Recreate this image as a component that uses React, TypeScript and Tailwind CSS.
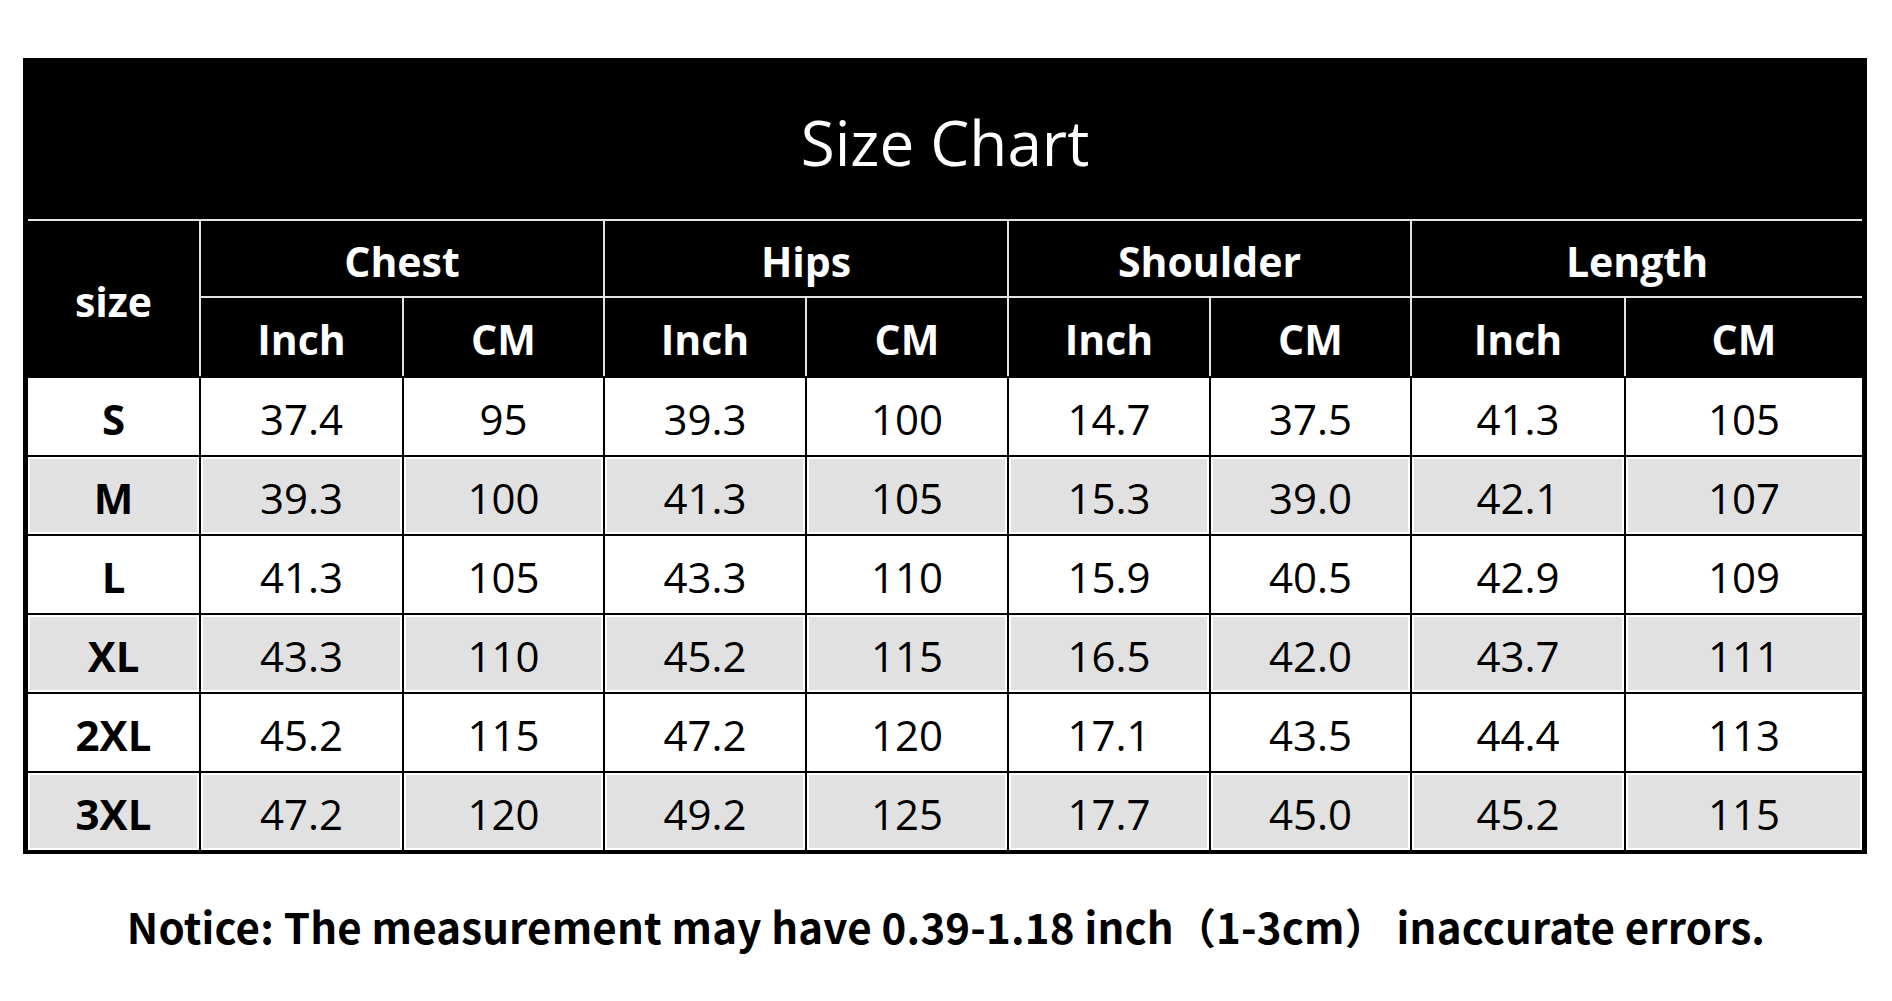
import React from "react";

const groups = ["Chest", "Hips", "Shoulder", "Length"];

const rows: { size: string; vals: string[] }[] = [
  { size: "S", vals: ["37.4", "95", "39.3", "100", "14.7", "37.5", "41.3", "105"] },
  { size: "M", vals: ["39.3", "100", "41.3", "105", "15.3", "39.0", "42.1", "107"] },
  { size: "L", vals: ["41.3", "105", "43.3", "110", "15.9", "40.5", "42.9", "109"] },
  { size: "XL", vals: ["43.3", "110", "45.2", "115", "16.5", "42.0", "43.7", "111"] },
  { size: "2XL", vals: ["45.2", "115", "47.2", "120", "17.1", "43.5", "44.4", "113"] },
  { size: "3XL", vals: ["47.2", "120", "49.2", "125", "17.7", "45.0", "45.2", "115"] },
];

export default function App() {
  return (
    <div className="min-h-screen bg-white pt-[58px] font-['Open_Sans',sans-serif]">
      <div className="ml-[23px] w-[1844px] border-[5px] border-b-[4px] border-black bg-black">
        <div className="flex h-[156px] items-center justify-center pt-[2px] text-[62px] leading-none text-white">
          Size Chart
        </div>
        <div className="grid grid-cols-[171px_203px_201px_202px_202px_202px_201px_214px_238px] grid-rows-[79px_78px_repeat(6,79px)]">
          <div className="row-span-2 flex items-center justify-center border-t-2 border-[#e4e4e4] pt-[6px] text-[41px] font-bold leading-none text-white">
            size
          </div>
          {groups.map((g) => (
            <div
              key={g}
              className="col-span-2 flex items-center justify-center border-t-2 border-b-2 border-l-2 border-[#e4e4e4] pt-[6px] text-[41px] font-bold leading-none text-white"
            >
              {g}
            </div>
          ))}
          {groups.map((g) => (
            <React.Fragment key={g + "-sub"}>
              <div className="flex items-center justify-center border-l-2 border-[#e4e4e4] pt-[4px] text-[41px] font-bold leading-none text-white">
                Inch
              </div>
              <div className="flex items-center justify-center border-l-2 border-[#e4e4e4] pt-[4px] text-[41px] font-bold leading-none text-white">
                CM
              </div>
            </React.Fragment>
          ))}
          {rows.map((r, i) => {
            const gray = i % 2 === 1;
            const bg = gray ? "bg-[#e1e1e1] shadow-[inset_0_0_0_2px_#ffffff]" : "bg-white";
            return (
              <React.Fragment key={r.size}>
                <div
                  className={`flex items-center justify-center border-t-2 border-black pt-[4px] text-[42px] font-bold leading-none text-black ${bg}`}
                >
                  {r.size}
                </div>
                {r.vals.map((v, j) => (
                  <div
                    key={j}
                    className={`flex items-center justify-center border-t-2 border-l-2 border-black pt-[4px] text-[42px] leading-none text-black ${bg}`}
                  >
                    {v}
                  </div>
                ))}
              </React.Fragment>
            );
          })}
        </div>
      </div>
      <div className="mt-[44px] whitespace-pre text-center font-['Noto_Sans_CJK_SC',sans-serif] text-[42px] font-bold leading-[56px] tracking-[0.18px] text-black">
        {"Notice: The measurement may have 0.39-1.18 inch（1-3cm） inaccurate errors."}
      </div>
    </div>
  );
}
